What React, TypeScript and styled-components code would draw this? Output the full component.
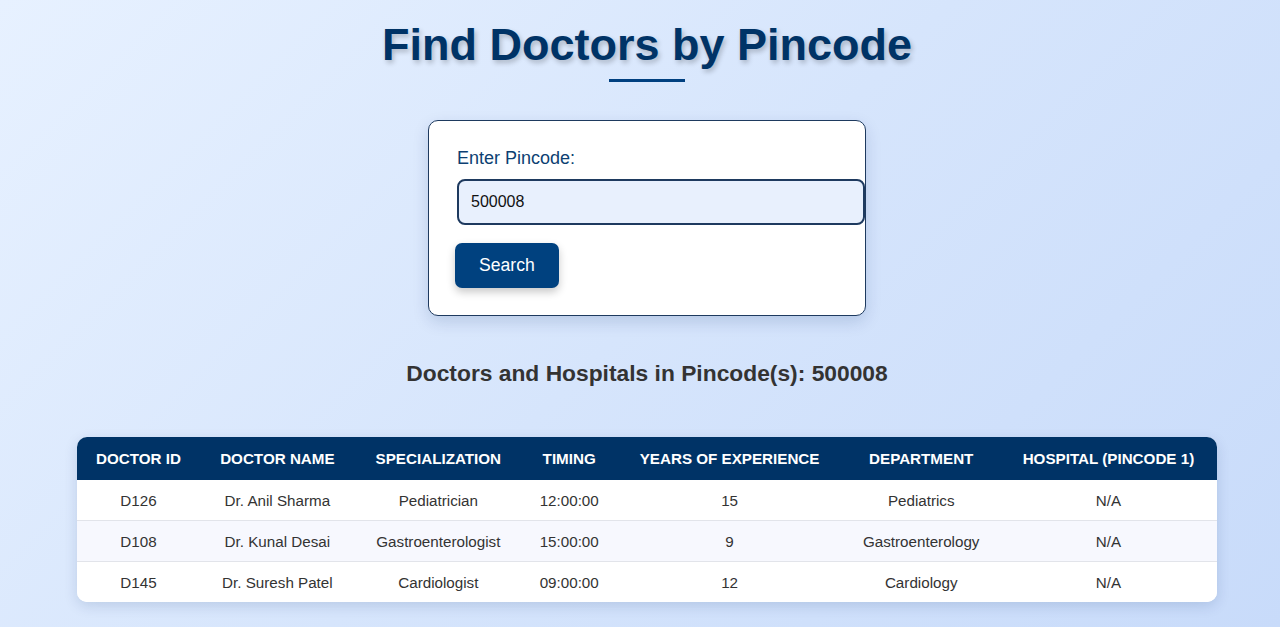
import { useState } from "react";
import { createGlobalStyle, styled } from "styled-components";

const doctors = [
  {
    id: "D126",
    name: "Dr. Anil Sharma",
    specialization: "Pediatrician",
    timing: "12:00:00",
    experience: 15,
    department: "Pediatrics",
    hospital: "N/A",
  },
  {
    id: "D108",
    name: "Dr. Kunal Desai",
    specialization: "Gastroenterologist",
    timing: "15:00:00",
    experience: 9,
    department: "Gastroenterology",
    hospital: "N/A",
  },
  {
    id: "D145",
    name: "Dr. Suresh Patel",
    specialization: "Cardiologist",
    timing: "09:00:00",
    experience: 12,
    department: "Cardiology",
    hospital: "N/A",
  },
];

const columns = [
  "Doctor ID",
  "Doctor Name",
  "Specialization",
  "Timing",
  "Years of Experience",
  "Department",
  "Hospital (Pincode 1)",
];

function App() {
  const [pincode, setPincode] = useState("500008");
  const [searched] = useState("500008");

  return (
    <>
      <GlobalStyle />
      <Page>
        <Title>Find Doctors by Pincode</Title>
        <TitleBar />
        <SearchCard>
          <Label htmlFor="pincode">Enter Pincode:</Label>
          <Input
            id="pincode"
            value={pincode}
            onChange={(e) => setPincode(e.target.value)}
          />
          <Button type="button">Search</Button>
        </SearchCard>

        <Results>
          <SubTitle>Doctors and Hospitals in Pincode(s): {searched}</SubTitle>
          <Table>
            <thead>
              <tr>
                {columns.map((c) => (
                  <Th key={c}>{c}</Th>
                ))}
              </tr>
            </thead>
            <tbody>
              {doctors.map((d, i) => (
                <Row key={d.id} $striped={i % 2 === 1}>
                  <Td>{d.id}</Td>
                  <Td>{d.name}</Td>
                  <Td>{d.specialization}</Td>
                  <Td>{d.timing}</Td>
                  <Td>{d.experience}</Td>
                  <Td>{d.department}</Td>
                  <Td>{d.hospital}</Td>
                </Row>
              ))}
            </tbody>
          </Table>
        </Results>
      </Page>
    </>
  );
}

export default App;

const GlobalStyle = createGlobalStyle`
  html, body {
    margin: 0;
    padding: 0;
  }

  body {
    font-family: "Liberation Sans", Arial, sans-serif;
    background: linear-gradient(135deg, #e7f1ff 0%, #d6e5fc 50%, #c8dbfa 100%);
    min-height: 100vh;
  }
`;

const Page = styled.div`
  min-height: 627px;
  padding: 19px 0 20px 14px;
  display: flex;
  flex-direction: column;
  align-items: center;
  box-sizing: border-box;
`;

const Title = styled.h1`
  margin: 0;
  font-size: 45px;
  font-weight: 700;
  color: #003366;
  text-shadow: 2px 3px 5px rgba(0, 0, 0, 0.22);
`;

const TitleBar = styled.div`
  width: 76px;
  height: 3px;
  margin-top: 8px;
  background: #004080;
`;

const SearchCard = styled.div`
  margin-top: 38px;
  width: 380px;
  padding: 27px 28px 27px;
  background: #ffffff;
  border: 1px solid #1e3a5f;
  border-radius: 10px;
  box-shadow: 0 6px 16px rgba(0, 40, 100, 0.15);
`;

const Label = styled.label`
  display: block;
  margin-bottom: 10px;
  font-size: 18px;
  color: #0d3f72;
`;

const Input = styled.input`
  display: block;
  width: 100%;
  padding: 12px;
  font-family: "Liberation Sans", Arial, sans-serif;
  font-size: 16px;
  color: #111;
  background: #e8f0fd;
  border: 2px solid #1e3a5f;
  border-radius: 8px;
  outline: none;
`;

const Button = styled.button`
  margin-top: 18px;
  margin-left: -2px;
  padding: 12px 24px;
  font-family: "Liberation Sans", Arial, sans-serif;
  font-size: 17.6px;
  color: #ffffff;
  background: #00417f;
  border: none;
  border-radius: 7px;
  box-shadow: 0 4px 8px rgba(0, 0, 0, 0.22);
  cursor: pointer;
`;

const Results = styled.div`
  margin-top: 44px;
  width: 1140px;
  display: flex;
  flex-direction: column;
  align-items: center;
`;

const SubTitle = styled.h2`
  margin: 0 0 50px;
  font-size: 22.8px;
  font-weight: 700;
  color: #333333;
`;

const Table = styled.table`
  width: 100%;
  border-collapse: collapse;
  background: #ffffff;
  border-radius: 10px;
  overflow: hidden;
  box-shadow: 0 4px 14px rgba(0, 40, 100, 0.14);
`;

const Th = styled.th`
  padding: 13px 14px;
  background: #003366;
  color: #ffffff;
  font-size: 15.2px;
  font-weight: 700;
  text-transform: uppercase;
  text-align: center;
  white-space: nowrap;
`;

const Row = styled.tr<{ $striped: boolean }>`
  background: ${(p) => (p.$striped ? "#f7f8fe" : "#ffffff")};
  border-bottom: 1px solid #e2e4ea;

  &:last-child {
    border-bottom: none;
  }
`;

const Td = styled.td`
  padding: 11.5px 14px;
  font-size: 15.2px;
  color: #333333;
  text-align: center;
  white-space: nowrap;
`;
